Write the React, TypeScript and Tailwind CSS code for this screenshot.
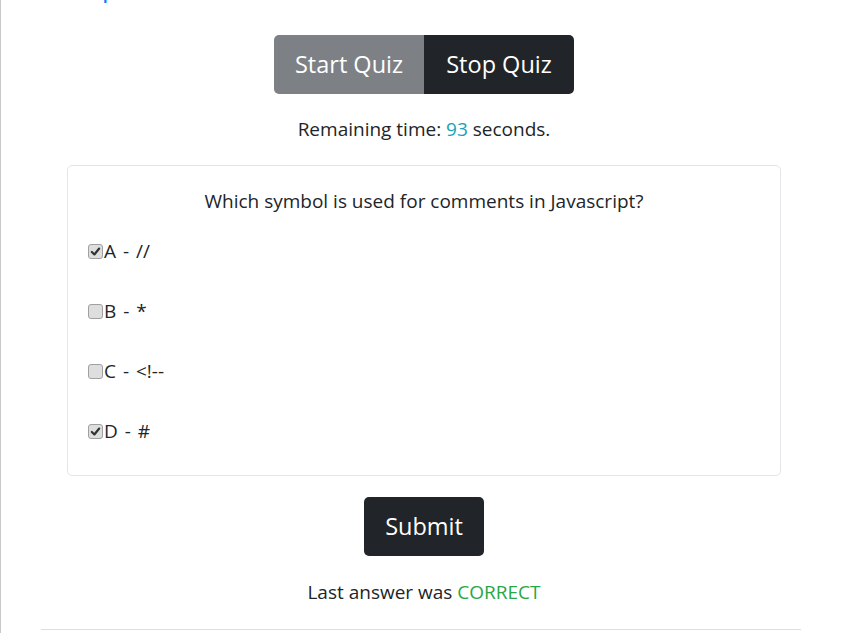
import React from "react";

const options = [
  { label: "A - //", checked: true },
  { label: "B - *", checked: false },
  { label: "C - <!--", checked: false },
  { label: "D - #", checked: true },
];

function Box({ checked }: { checked: boolean }) {
  return (
    <span className="flex h-[15px] w-[15px] items-center justify-center rounded-[3px] border border-[#a0a0a0] bg-[#dedede]">
      {checked && (
        <svg width="11" height="11" viewBox="0 0 12 12">
          <path
            d="M2 6.5 L4.8 9.2 L10 2.8"
            fill="none"
            stroke="#333"
            strokeWidth="2.4"
            strokeLinecap="round"
            strokeLinejoin="round"
          />
        </svg>
      )}
    </span>
  );
}

export default function App() {
  return (
    <div
      className="min-h-[633px] w-[860px] border-l border-[#c8c8c8] bg-white text-[#212529] overflow-hidden"
      style={{ fontFamily: '"Open Sans", "Noto Sans", sans-serif' }}
    >
      {/* heading, mostly scrolled out of view */}
      <div className="h-[3px] overflow-hidden pl-[101px]">
        <span className="block text-[26px] leading-none -mt-[24px] text-[#007bff]">
          p
        </span>
      </div>

      <div className="ml-[66px] w-[714px] flex flex-col items-center">
        <div className="mt-[32px] flex h-[59px] rounded-[5px] overflow-hidden">
          <button className="w-[150px] bg-[#7d8185] text-white text-[23.5px]">
            Start Quiz
          </button>
          <button className="w-[150px] bg-[#212529] text-white text-[23.5px]">
            Stop Quiz
          </button>
        </div>

        <p className="mt-[22px] text-[19px] leading-[27px]">
          Remaining time: <span className="text-[#17a2b8]">93</span> seconds.
        </p>

        <div className="mt-[22px] w-full rounded-[5px] border border-[#e3e6e9] pt-[22px] pb-[14px]">
          <p className="text-center text-[19px] leading-[27px]">
            Which symbol is used for comments in Javascript?
          </p>
          <div className="mt-[6px] flex flex-col">
            {options.map((o) => (
              <label
                key={o.label}
                className="flex h-[60px] items-center pl-[20px] text-[19px] [word-spacing:2px]"
              >
                <Box checked={o.checked} />
                <span className="ml-[1px]">{o.label}</span>
              </label>
            ))}
          </div>
        </div>

        <button className="mt-[21px] h-[59px] w-[120px] rounded-[5px] bg-[#212529] text-white text-[23.5px]">
          Submit
        </button>

        <p className="mt-[23px] text-[19px] leading-[27px]">
          Last answer was <span className="text-[#28a745]">CORRECT</span>
        </p>
      </div>

      <hr className="mt-[23px] ml-[40px] w-[760px] border-t border-[#dcdfe2]" />
    </div>
  );
}
